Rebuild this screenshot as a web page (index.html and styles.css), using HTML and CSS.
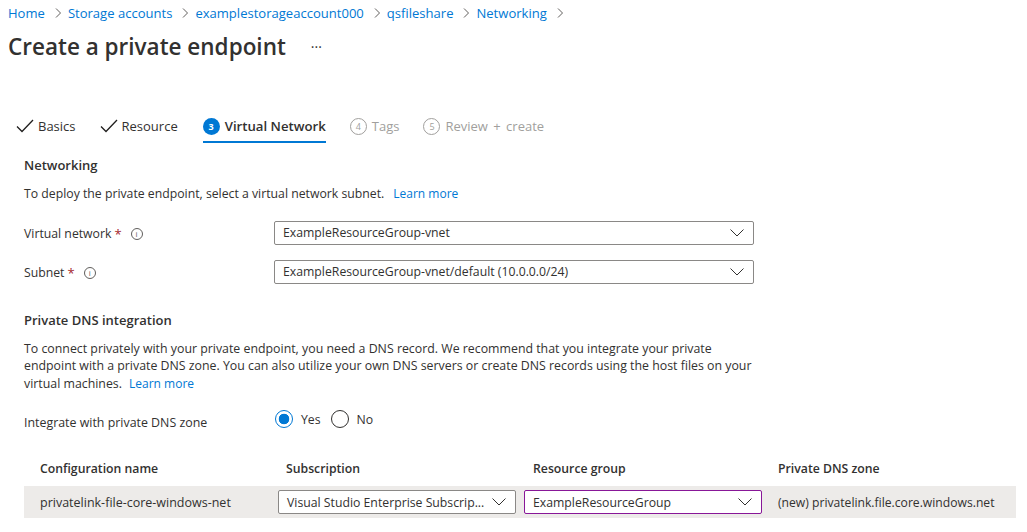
FILE: index.html

```html
<!DOCTYPE html>
<html lang="en">
<head>
<meta charset="UTF-8"/>
<title>Create a private endpoint</title>
<link rel="stylesheet" href="styles.css">
</head>
<body>
<div id="wrapper">

<nav class="crumbs">
	<a href="#">Home</a><svg class="sep" viewBox="0 0 6 10"><path d="M1 .5 5.5 5 1 9.5"/></svg>
	<a href="#">Storage accounts</a><svg class="sep" viewBox="0 0 6 10"><path d="M1 .5 5.5 5 1 9.5"/></svg>
	<a href="#">examplestorageaccount000</a><svg class="sep" viewBox="0 0 6 10"><path d="M1 .5 5.5 5 1 9.5"/></svg>
	<a href="#">qsfileshare</a><svg class="sep" viewBox="0 0 6 10"><path d="M1 .5 5.5 5 1 9.5"/></svg>
	<a href="#">Networking</a><svg class="sep" viewBox="0 0 6 10"><path d="M1 .5 5.5 5 1 9.5"/></svg>
</nav>

<div class="titlebar">
	<h1>Create a private endpoint</h1>
	<span class="more">&middot;&middot;&middot;</span>
</div>

<div class="tabs">
	<div class="tab done"><svg class="check" viewBox="0 0 18 14"><path d="M1 7.5 6 12.5 17 1"/></svg>Basics</div>
	<div class="tab done"><svg class="check" viewBox="0 0 18 14"><path d="M1 7.5 6 12.5 17 1"/></svg>Resource</div>
	<div class="tab active"><span class="num">3</span>Virtual Network</div>
	<div class="tab off"><span class="num">4</span>Tags</div>
	<div class="tab off review"><span class="num">5</span>Review + create</div>
</div>

<div class="content">
	<h2>Networking</h2>
	<p class="intro">To deploy the private endpoint, select a virtual network subnet.<a class="learn" href="#">Learn more</a></p>

	<div class="field">
		<label>Virtual network<span class="req">*</span><span class="info">i</span></label>
		<div class="select wide">ExampleResourceGroup-vnet<svg class="chev" viewBox="0 0 14 8"><path d="M.5 .5 7 7 13.5 .5"/></svg></div>
	</div>
	<div class="field">
		<label>Subnet<span class="req">*</span><span class="info">i</span></label>
		<div class="select wide">ExampleResourceGroup-vnet/default (10.0.0.0/24)<svg class="chev" viewBox="0 0 14 8"><path d="M.5 .5 7 7 13.5 .5"/></svg></div>
	</div>

	<h2 class="second">Private DNS integration</h2>
	<p class="dns">To connect privately with your private endpoint, you need a DNS record. We recommend that you integrate your private<br>endpoint with a private DNS zone. You can also utilize your own DNS servers or create DNS records using the host files on your<br>virtual machines.<a class="learn" href="#">Learn more</a></p>

	<div class="radios">
		<label>Integrate with private DNS zone</label>
		<div class="radio on"><span class="dot"></span>Yes</div>
		<div class="radio"><span class="dot"></span>No</div>
	</div>

	<div class="thead">
		<div>Configuration name</div>
		<div>Subscription</div>
		<div>Resource group</div>
		<div>Private DNS zone</div>
	</div>
	<div class="trow">
		<div class="cell">privatelink-file-core-windows-net</div>
		<div class="select small">Visual Studio Enterprise Subscrip...<svg class="chev" viewBox="0 0 14 8"><path d="M.5 .5 7 7 13.5 .5"/></svg></div>
		<div class="select small purple">ExampleResourceGroup<svg class="chev" viewBox="0 0 14 8"><path d="M.5 .5 7 7 13.5 .5"/></svg></div>
		<div class="last">(new) privatelink.file.core.windows.net</div>
	</div>
</div>

</div>
</body>
</html>
```

FILE: styles.css

```css
html, body {
	margin:0;
	background:#fff;
}
body {
	font-family:"Open Sans","Noto Sans","Liberation Sans",sans-serif;
	font-size:12.25px;
	color:#323130;
	overflow:hidden;
}
#wrapper {
	width:1027px;
	height:532px;
}
a {
	color:#0078d4;
	text-decoration:none;
}

.crumbs {
	display:flex;
	align-items:center;
	height:16px;
	padding:5px 0 0 8px;
	font-size:13.05px;
}
.sep {
	width:6px;
	height:10px;
	margin:0 7px 0 10px;
	fill:none;
	stroke:#605e5c;
	stroke-width:1;
}

.titlebar {
	display:flex;
	align-items:center;
	height:34px;
	padding:8px 0 0 8px;
}
h1 {
	margin:0;
	font-size:22.5px;
	font-weight:600;
}
.more {
	margin-left:25px;
	font-size:14px;
	font-weight:400;
}

.tabs {
	display:flex;
	height:33px;
	margin-top:48px;
	padding-left:16px;
}
.tab {
	display:flex;
	align-items:center;
	height:30px;
	margin-right:24px;
	font-size:13px;
}
.tab.active {
	margin-left:1px;
	border-bottom:2px solid #0078d4;
	font-size:13.2px;
	font-weight:600;
}
.tab.off {
	color:#a19f9d;
}
.review {
	word-spacing:2px;
}
.check {
	width:18px;
	height:14px;
	margin-right:4px;
	fill:none;
	stroke:#201f1e;
	stroke-width:1.3;
}
.num {
	display:flex;
	align-items:center;
	justify-content:center;
	box-sizing:border-box;
	width:17px;
	height:17px;
	margin-right:5px;
	border-radius:50%;
	background:#0078d4;
	color:#fff;
	font-size:9px;
	font-weight:700;
}
.off .num {
	border:1px solid #a19f9d;
	background:#fff;
	color:#a19f9d;
	font-weight:400;
}

.content {
	padding:0 0 0 24px;
}
h2 {
	margin:12px 0 0;
	height:18px;
	line-height:18px;
	font-size:13px;
	font-weight:600;
}
p {
	margin:0;
	line-height:17.5px;
}
.intro {
	margin-top:11px;
}
.learn {
	margin-left:9px;
	font-size:12px;
}
.dns .learn {
	margin-left:7px;
}

.field {
	display:flex;
	align-items:center;
	height:24px;
	margin-top:18px;
}
.field + .field {
	margin-top:15px;
}
.field label {
	display:flex;
	align-items:center;
	width:250px;
	padding-top:2px;
}
.req {
	margin-left:3px;
	color:#a4262c;
	font-size:13px;
}
.info {
	display:inline-flex;
	align-items:center;
	justify-content:center;
	box-sizing:border-box;
	width:12px;
	height:12px;
	margin-left:9px;
	border:1px solid #605e5c;
	border-radius:50%;
	color:#605e5c;
	font-size:8px;
	line-height:1;
}

.select {
	display:flex;
	align-items:center;
	justify-content:space-between;
	box-sizing:border-box;
	height:24px;
	padding:0 8px;
	border:1px solid #8a8886;
	border-radius:2px;
	background:#fff;
}
.select.wide {
	width:480px;
}
.select.purple {
	border-color:#881798;
}
.chev {
	width:14px;
	height:8px;
	margin-right:1px;
	fill:none;
	stroke:#323130;
	stroke-width:1;
	flex:none;
}

.second {
	margin-top:27px;
}
.dns {
	margin-top:11px;
	font-size:12.35px;
}

.radios {
	display:flex;
	align-items:flex-start;
	height:24px;
	margin-top:18px;
}
.radios label {
	width:251px;
	padding-top:4px;
	font-size:12.4px;
}
.radio {
	display:flex;
	align-items:center;
	height:18px;
	margin-right:10px;
}
.dot {
	box-sizing:border-box;
	width:18px;
	height:18px;
	margin-right:8px;
	border:1px solid #323130;
	border-radius:50%;
	background:#fff;
}
.on .dot {
	border-color:#0078d4;
	background:radial-gradient(circle,#0078d4 0,#0078d4 5px,#fff 5.6px);
}

.thead {
	display:grid;
	grid-template-columns:246px 247px 245px auto;
	align-items:start;
	box-sizing:border-box;
	width:992px;
	height:26px;
	margin-top:26px;
	padding-left:16px;
	font-weight:600;
}
.trow {
	display:grid;
	grid-template-columns:238px 246px 246px auto;
	align-items:center;
	box-sizing:border-box;
	width:992px;
	height:32px;
	padding-left:16px;
	background:#edebe9;
}
.trow .select {
	width:238px;
}
.cell {
	font-size:12.5px;
}
.last {
	margin-left:8px;
	font-size:12.15px;
}
```
